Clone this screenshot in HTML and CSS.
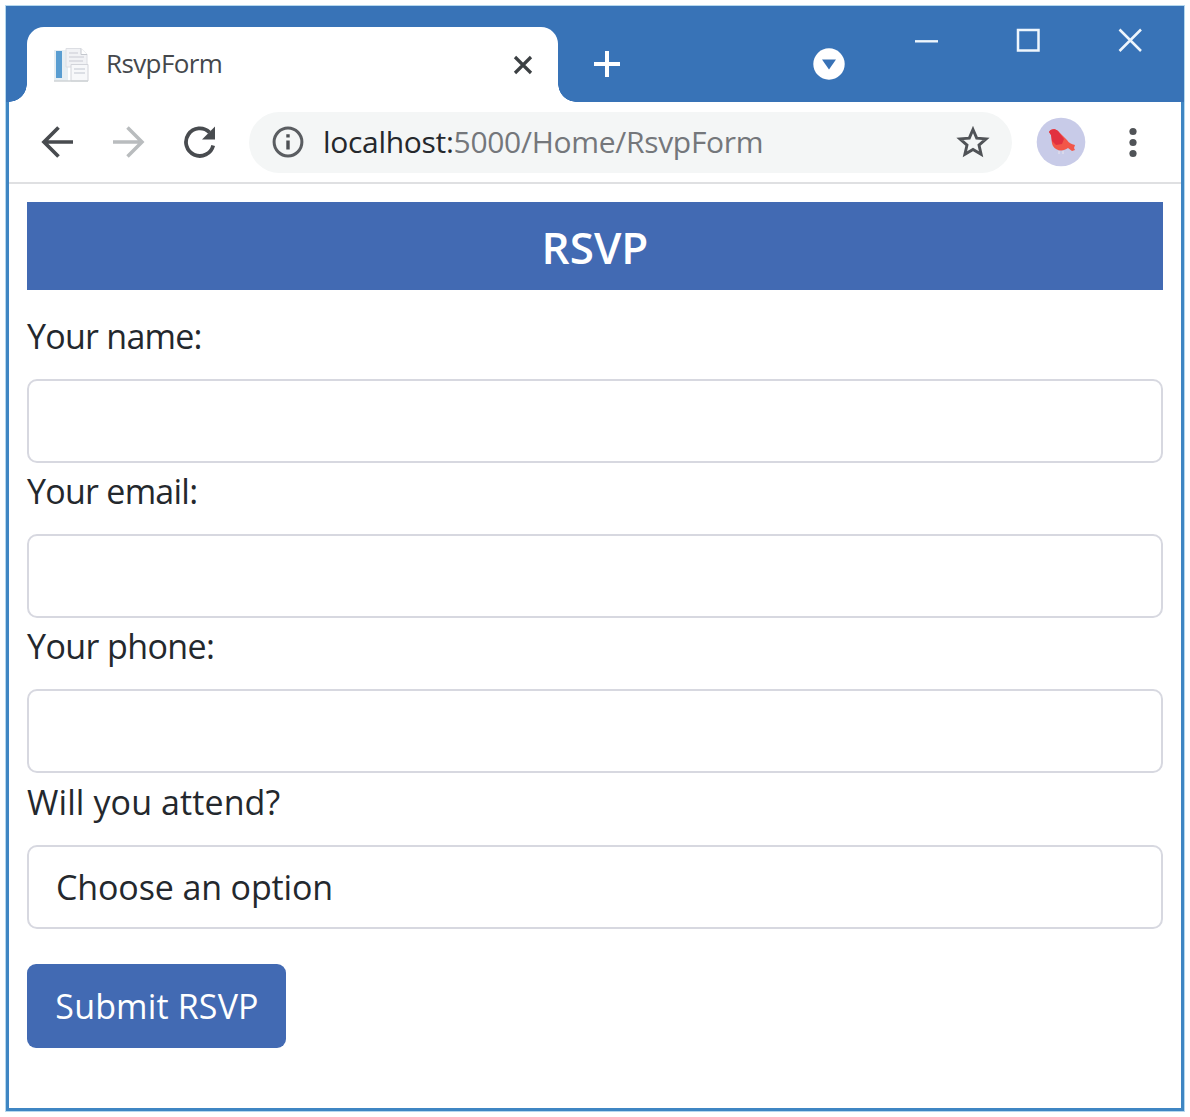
FILE: index.html
```html
<!DOCTYPE html>
<html lang="en">
<head>
<meta charset="utf-8">
<title>RsvpForm</title>
<link rel="stylesheet" href="styles.css">
</head>
<body>
<div class="window">
  <header class="titlebar">
    <div class="tab">
      <svg class="favicon" width="36" height="36" viewBox="0 0 36 36">
        <path d="M0 3h14v31H0z" fill="#e6eef3"/>
        <path d="M2 4h6v27H2z" fill="#599dd1"/>
        <path d="M12 1.500h15l6 6V20H12z" fill="#f1f2f5" stroke="#dcdee3"/>
        <path d="M27 1.500v6h6" fill="#fff" stroke="#c5c8ce"/>
        <path d="M15 6h9M15 10h15M15 14h14" stroke="#d6d8de" stroke-width="1.500"/>
        <path d="M17 17.500h17V34H17z" fill="#f7f8fa" stroke="#d2d4da"/>
        <path d="M20 22h11M20 26h11" stroke="#d4d6de" stroke-width="1.500"/>
        <path d="M0 34h34" stroke="#cfd3d6" stroke-width="1.500"/>
      </svg>
      <span class="tab-title">RsvpForm</span>
      <svg class="tab-close" width="20" height="20" viewBox="0 0 20 20"><path d="M2 2l16 16M18 2L2 18" stroke="#3c4043" stroke-width="3.200"/></svg>
    </div>
    <svg class="new-tab" width="28" height="28" viewBox="0 0 28 28"><path d="M14 1v26M1 14h26" stroke="#fff" stroke-width="4"/></svg>
    <svg class="tab-search" width="32" height="32" viewBox="0 0 32 32"><circle cx="16" cy="16" r="15.700" fill="#fff"/><path d="M9 11.500h14l-7 10z" fill="#3872b6"/></svg>
    <div class="controls">
      <svg width="24" height="24" viewBox="0 0 24 24"><path d="M1 13.300h23" stroke="#eef6fd" stroke-width="2.400"/></svg>
      <svg width="24" height="24" viewBox="0 0 24 24"><path d="M2 2h20.500v20.500H2z" fill="none" stroke="#eef6fd" stroke-width="2.500"/></svg>
      <svg width="24" height="24" viewBox="0 0 24 24"><path d="M1.500 1.500l21.500 21.500M23 1.500L1.500 23" stroke="#eef6fd" stroke-width="2.500"/></svg>
    </div>
  </header>
  <nav class="toolbar">
    <svg class="back" width="34" height="34" viewBox="0 0 34 34"><path d="M33 17H4M18.500 2.500L4 17l14.500 14.500" fill="none" stroke="#484b4f" stroke-width="3.700"/></svg>
    <svg class="forward" width="34" height="34" viewBox="0 0 34 34"><path d="M1 17h29M15.500 2.500L30 17 15.500 31.500" fill="none" stroke="#b9bcbe" stroke-width="3.500"/></svg>
    <svg class="reload" width="34" height="34" viewBox="0 0 34 34"><path d="M30.200 20.500a13.800 13.800 0 1 1-3.700-13.200" fill="none" stroke="#484b4f" stroke-width="3.800"/><path d="M32 1.500v13H19z" fill="#484b4f"/></svg>
    <div class="address">
      <svg class="info" width="32" height="32" viewBox="0 0 32 32"><circle cx="16" cy="16" r="13.900" fill="none" stroke="#5a5d61" stroke-width="3"/><path d="M16 14.500v9M16 8.200v3.300" stroke="#4d5054" stroke-width="3.400"/></svg>
      <span class="url"><span class="host">localhost:</span>5000/Home/RsvpForm</span>
      <svg class="star" width="34" height="34" viewBox="0 0 34 34"><path d="M17 4.500l3.700 8.600 9.400.8-7.100 6.200 2.100 9.200-8.100-4.900-8.100 4.900L11 20.100l-7.100-6.200 9.400-.8z" fill="none" stroke="#505357" stroke-width="2.900"/></svg>
    </div>
    <svg class="avatar" width="50" height="50" viewBox="0 0 50 50"><circle cx="25" cy="25" r="24.300" fill="#c8cbe8"/><path d="M13 15c1-3 6-4 9-1l9 9c2 3 4 4 8 5l-1 3 1 2-3 1-4-3c-5 4-12 3-15-2-2-4-1-8-2-11z" fill="#f25648"/><path d="M13 15c1-3 6-4 9-1l6 8-2 5-6 1-4-4-1-6z" fill="#e2303f"/><path d="M23 34v3M27 34v3" stroke="#e9e5ed"/></svg>
    <svg class="menu" width="8" height="32" viewBox="0 0 8 32"><circle cx="4" cy="5.500" r="3.600" fill="#505357"/><circle cx="4" cy="16.500" r="3.600" fill="#505357"/><circle cx="4" cy="27.500" r="3.600" fill="#505357"/></svg>
  </nav>
  <main class="page">
    <h1 class="banner">RSVP</h1>
    <form class="form">
      <div class="group"><label class="label name" for="name">Your name:</label><input class="field" id="name" type="text"></div>
      <div class="group"><label class="label email" for="email">Your email:</label><input class="field" id="email" type="text"></div>
      <div class="group"><label class="label phone" for="phone">Your phone:</label><input class="field" id="phone" type="text"></div>
      <div class="group"><label class="label attend" for="attend">Will you attend?</label>
        <select class="field" id="attend"><option>Choose an option</option><option>Yes, I'll be there</option><option>No, I can't come</option></select></div>
      <button class="submit" type="button">Submit RSVP</button>
    </form>
  </main>
</div>
</body>
</html>
```
FILE: styles.css
```css
* { box-sizing: border-box; }
body {
  margin: 0;
  padding: 5px;
  background: #fff;
  font-family: "Open Sans", "Noto Sans", sans-serif;
  color: #24282d;
}
svg { display: block; flex: none; }
.window {
  width: 1180px;
  height: 1107px;
  border: 4px solid #3f86c3;
  outline: 1px solid #b5d8ee;
  outline-offset: -1px;
  background: #fff;
}
.titlebar {
  display: flex;
  height: 96px;
  margin: -3px -3px 0;
  padding: 21px 0 0 21px;
  background: #3873b7;
}
.tab {
  position: relative;
  display: flex;
  align-items: center;
  width: 531px;
  height: 75px;
  padding: 0 25px 0 27px;
  border-radius: 17px 17px 0 0;
  background: #fff;
}
.tab::before, .tab::after {
  content: "";
  position: absolute;
  bottom: 0;
  width: 18px;
  height: 18px;
}
.tab::before { left: -18px; background: radial-gradient(circle at 0 0, transparent 17.500px, #fff 18px); }
.tab::after { right: -18px; background: radial-gradient(circle at 100% 0, transparent 17.500px, #fff 18px); }
.tab-title {
  flex: 1;
  margin-left: 16px;
  padding-bottom: 3px;
  font-size: 26px;
  letter-spacing: -0.600px;
  color: #45484c;
  white-space: nowrap;
}
.new-tab { margin: 23px 0 0 35px; }
.tab-search { margin: 21px 0 0 192px; }
.controls { display: flex; gap: 78px; margin: 1px 0 0 69px; }
.toolbar {
  display: flex;
  align-items: center;
  height: 82px;
  padding-left: 31px;
  border-bottom: 2px solid #dfe0e2;
}
.forward { margin-left: 38px; }
.reload { margin-left: 37px; }
.address {
  display: flex;
  align-items: center;
  width: 763px;
  height: 61px;
  margin-left: 32px;
  padding: 0 22px 0 23px;
  border-radius: 31px;
  background: #f4f6f6;
}
.url {
  flex: 1;
  margin-left: 19px;
  padding-bottom: 2px;
  font-size: 30px;
  letter-spacing: -0.300px;
  color: #74777b;
  white-space: nowrap;
}
.host { color: #25282c; }
.avatar { margin-left: 24px; }
.menu { margin-left: 43px; }
.page { padding: 18px 18px 0; }
.banner {
  height: 88px;
  margin: 0;
  background: #426ab3;
  color: #fff;
  font-size: 44px;
  font-weight: 600;
  line-height: 90px;
  text-align: center;
}
.form { padding-top: 18px; }
.group { height: 155.200px; }
.label {
  display: block;
  width: max-content;
  height: 71px;
  font-size: 34px;
  line-height: 57px;
}
.name, .email { letter-spacing: -0.750px; }
.phone { letter-spacing: -0.600px; }
.attend { letter-spacing: 0.100px; }
.field {
  display: block;
  width: 100%;
  height: 84px;
  padding: 0 27px;
  border: 2px solid #d7d8e0;
  border-radius: 10px;
  background: #fff;
  color: inherit;
  font: 34px "Open Sans", "Noto Sans", sans-serif;
  letter-spacing: -0.130px;
  appearance: none;
}
.submit {
  display: block;
  width: 259px;
  height: 84px;
  margin-top: 35.200px;
  padding: 1px 0 0 1px;
  border: 0;
  border-radius: 9px;
  background: #426ab3;
  color: #fff;
  font: 34px "Open Sans", "Noto Sans", sans-serif;
  letter-spacing: 0.150px;
}
```
